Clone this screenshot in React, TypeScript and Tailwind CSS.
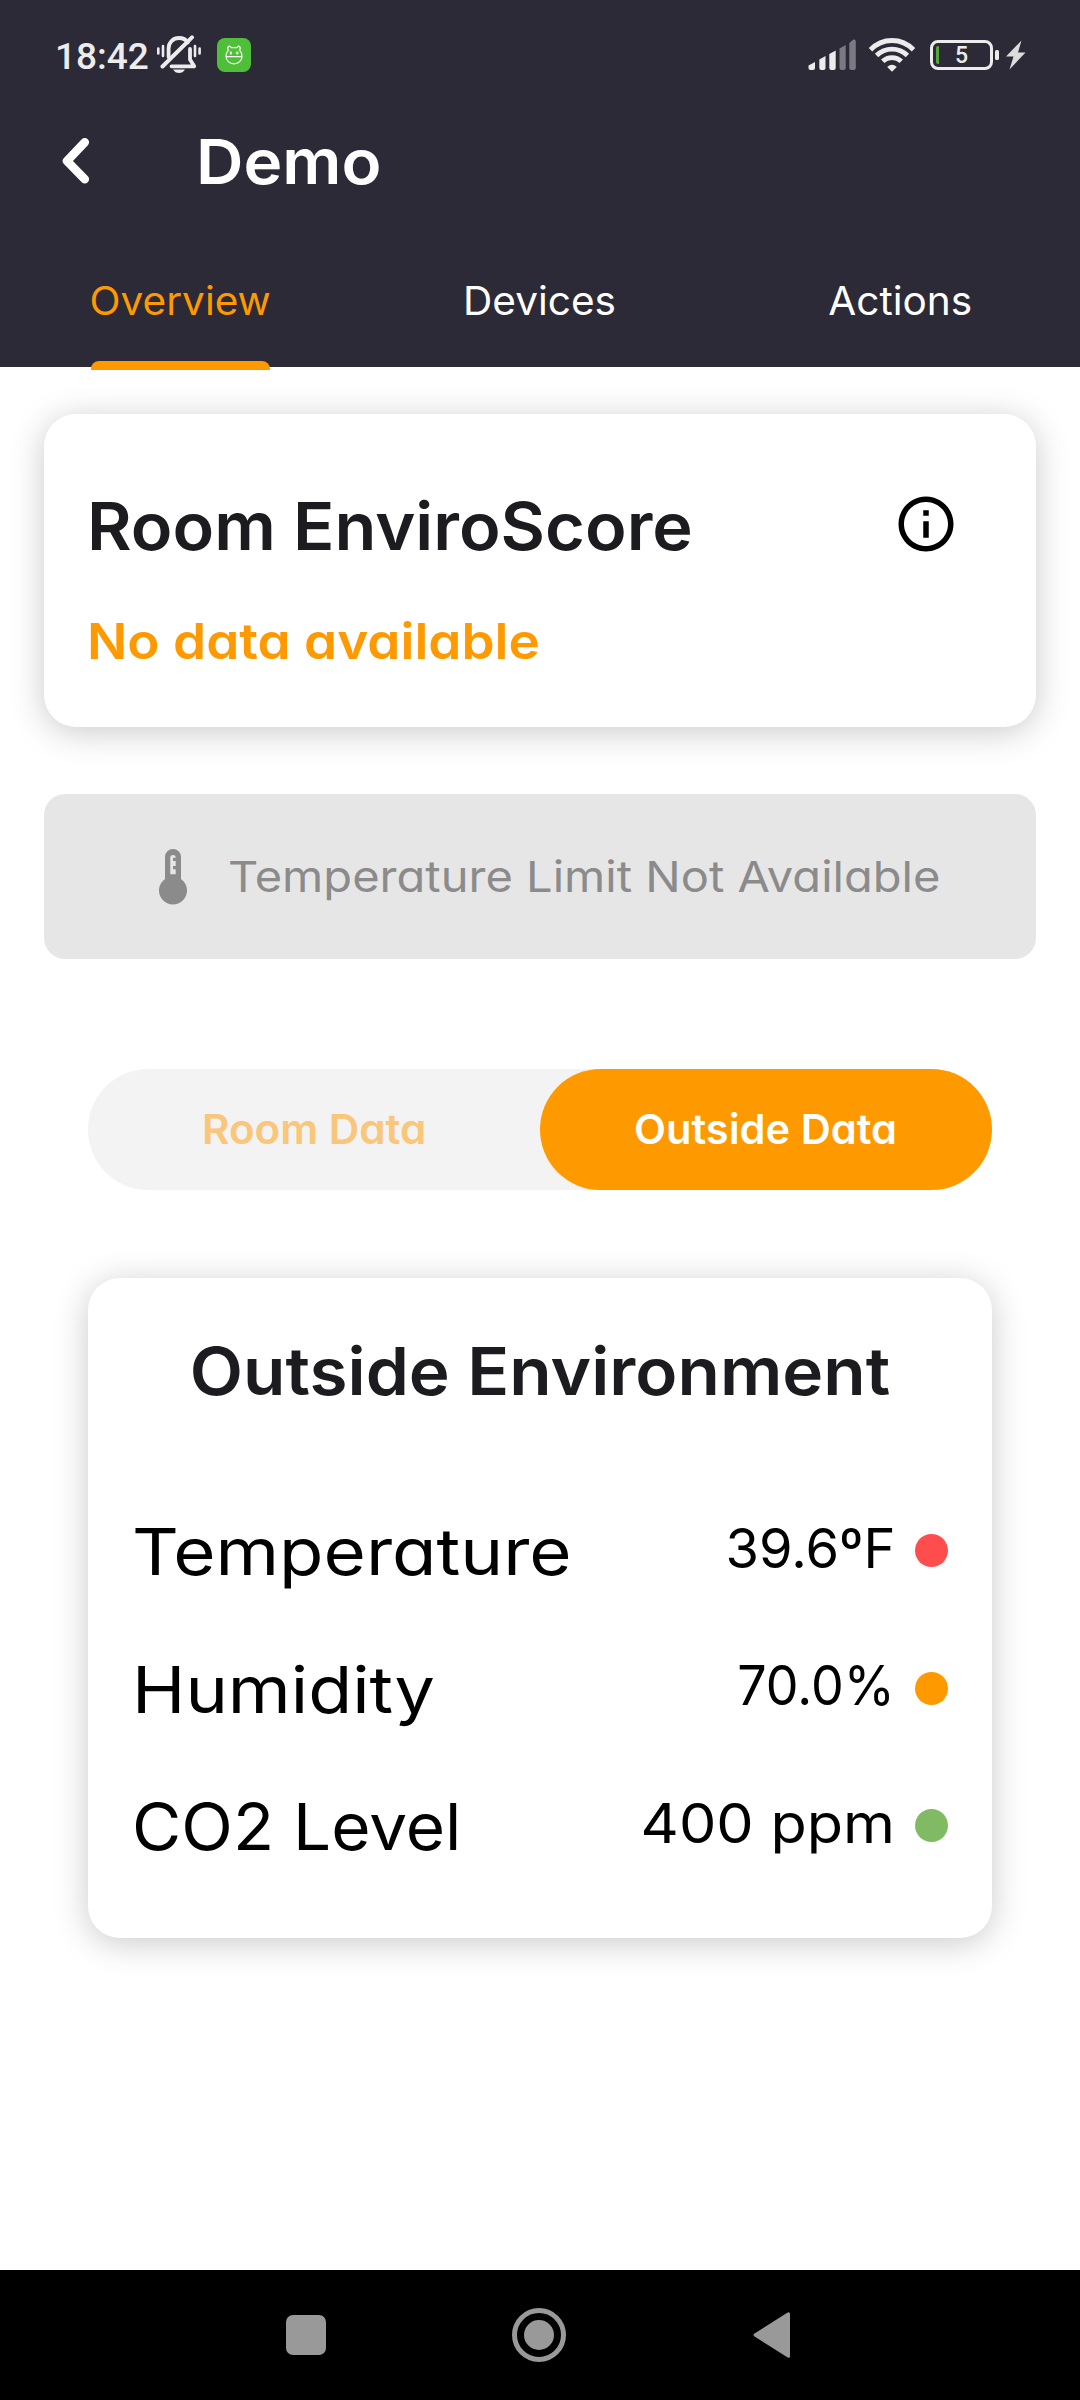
import { MdInfoOutline } from 'react-icons/md';

function BellOffIcon() {
  return (
    <svg width="46" height="40" viewBox="0 0 46 40" fill="none" stroke="#ececec" strokeLinecap="round">
      <path d="M2.3 13.5v5M7 11v10M39 11v10M43.6 13.5v5" strokeWidth="2.6" />
      <path d="M12.6 22V13.5C12.6 7 17.5 3 23 3c3.6 0 7 1.6 8.8 4.4M34 14v10.5l4.2 6.8H15.500" strokeWidth="3.8" strokeLinejoin="round" />
      <path d="M36 2.300 6.500 31.500" strokeWidth="4" />
      <path d="M17 34.500h12c-1.500 2.500-3.500 3.500-6 3.500s-4.500-1-6-3.500z" fill="#ececec" stroke="none" />
    </svg>
  );
}

function AppBadge() {
  return (
    <div className="flex h-[34px] w-[34px] items-center justify-center rounded-[8px] bg-[#4fbf3a]">
      <svg width="18" height="20" viewBox="0 0 18 20" fill="none" stroke="#f4ffef" strokeWidth="1.2" strokeLinejoin="round">
        <path d="M3.300 5.300C2.600 3.600 2.700 2 3.800 1.300c1-.5 2 .3 2.500 1.400h5.400c.5-1.100 1.500-1.900 2.500-1.400 1.100.7 1.200 2.300.5 4 1.700 1.700 2.300 3.700 2.300 5.900 0 4.400-3.400 7.600-8 7.600s-8-3.200-8-7.600c0-2.200.6-4.200 2.300-5.900z" />
        <path d="M1 11.700h16M10.800 8h3M12.300 6.500v3" />
        <path d="M5.800 6.500v3" strokeWidth="1.800" />
      </svg>
    </div>
  );
}

function SignalIcon() {
  return (
    <svg width="50" height="32" viewBox="0 0 50 32" fill="#ececec">
      <path d="M.5 26.500 7 23v6q0 2-2 2H2.500q-2 0-2-2z" />
      <path d="M11.300 20.500 17.500 17v12q0 2-2 2h-2.200q-2 0-2-2z" />
      <path d="M21.300 15 27.700 11.500V29q0 2-2 2h-2.400q-2 0-2-2z" />
      <g fill="#7b7a83">
        <path d="M31.500 9.500 37.700 6v23q0 2-2 2h-2.200q-2 0-2-2z" />
        <path d="M41.300 4 45 .8q2.800-.8 2.800 2V29q0 2-2 2h-2.500q-2 0-2-2z" />
      </g>
    </svg>
  );
}

function WifiIcon() {
  return (
    <svg width="48" height="36" viewBox="0 0 48 36" fill="none" stroke="#ececec" strokeWidth="4.800">
      <path d="M2.500 12.700C14.500.4 33.500.4 45.500 12.700" />
      <path d="M8.600 18.500c8.600-8.500 22.200-8.500 30.800 0" />
      <path d="M14.700 24.300c5.300-5 13.300-5 18.600 0" />
      <path d="M19.200 30q4.800-4.300 9.600 0L24 34.800z" fill="#ececec" stroke="none" />
    </svg>
  );
}

function BatteryIcon() {
  return (
    <div className="flex items-center gap-[2px]">
      <div className="relative flex h-[30px] w-[63px] items-center justify-center rounded-[8px] border-[3px] border-[#ececec]">
        <span className="absolute left-[3px] top-[3px] h-[18px] w-[3px] rounded-l-[2px] bg-[#55a637]" />
        <span className="font-[Roboto] text-[23px] leading-none font-medium text-[#ececec]">5</span>
      </div>
      <span className="h-[10px] w-[4px] rounded-[1.5px] bg-[#ececec]" />
    </div>
  );
}

function ThermometerIcon() {
  return (
    <svg width="28" height="56" viewBox="0 0 28 56" fill="#8b8b8b">
      <path d="M6 30V8a8 8 0 0 1 16 0v22a14 14 0 1 1-16 0z" />
      <path d="M11.300 25.300V8.700q0-2.700 2.700-2.700t2.700 2.700H14V12h2.700v5H14v3.300h2.700v5z" fill="#e6e6e6" />
    </svg>
  );
}

const tabs = [
  { label: 'Overview', active: true },
  { label: 'Devices', active: false },
  { label: 'Actions', active: false },
];

const readings = [
  { label: 'Temperature', labelClass: 'scale-x-[1.117]', value: '39.6ºF', valueClass: 'scale-x-[0.985]', dot: 'bg-[#ff4d4d]' },
  { label: 'Humidity', labelClass: 'scale-x-[1.105]', value: '70.0%', valueClass: 'scale-x-[0.945]', dot: 'bg-[#ff9900]' },
  { label: 'CO2 Level', labelClass: 'scale-x-[1.038]', value: '400 ppm', valueClass: 'scale-x-[1.078]', dot: 'bg-[#80bb64]' },
];

export default function App() {
  return (
    <div className="flex h-[2400px] w-[1080px] flex-col overflow-hidden bg-white font-[Inter,sans-serif] [font-feature-settings:'cv11']">
      <header className="h-[367px] shrink-0 bg-[#2b2a36] text-white">
        <div className="flex h-[110px] items-center justify-between pr-[54px] pl-[55px]">
          <div className="flex items-center">
            <span className="w-[101px] pt-[2px] font-[Roboto] text-[37px] leading-none font-medium text-[#ececec]">18:42</span>
            <BellOffIcon />
            <div className="ml-[15px]">
              <AppBadge />
            </div>
          </div>
          <div className="flex items-center">
            <SignalIcon />
            <div className="ml-[10px]">
              <WifiIcon />
            </div>
            <div className="ml-[14px]">
              <BatteryIcon />
            </div>
            <svg className="ml-[7px]" width="20" height="30" viewBox="0 0 20 30" fill="#dcdcdc">
              <path d="M15.500.5 0 16.500h7.500L3.500 29.500 19.500 12.500H12z" />
            </svg>
          </div>
        </div>
        <div className="flex h-[102px] items-center pl-[61px]">
          <svg width="30" height="48" viewBox="0 0 30 48" fill="none" stroke="white" strokeWidth="8.500" strokeLinecap="round" strokeLinejoin="round">
            <path d="M23.800 5.300 6 24l17.800 18.300" />
          </svg>
          <h1 className="ml-[105px] origin-left scale-x-[1.06] pt-[2px] text-[62px] leading-none font-semibold">Demo</h1>
        </div>
        <nav className="grid h-[158px] grid-cols-3">
          {tabs.map((tab) => (
            <div key={tab.label} className="flex flex-col items-center justify-between pt-[69px]">
              <span className={tab.active ? 'scale-x-[1.04] text-[39px] leading-[40px] text-[#ff9900]' : 'scale-x-[1.04] text-[39px] leading-[40px]'}>
                {tab.label}
              </span>
              {tab.active && <span className="relative h-[9px] w-[179px] rounded-t-[8px] bg-[#ff9900]" />}
            </div>
          ))}
        </nav>
      </header>

      <main className="flex flex-1 flex-col px-[44px] pt-[47px]">
        <section className="h-[313px] rounded-[32px] bg-white pt-[72px] pr-[77px] pl-[43px] shadow-[0_5px_34px_rgba(0,0,0,0.21)]">
          <div className="flex h-[80px] items-center justify-between">
            <h2 className="origin-left scale-x-[1.037] text-[66px] leading-none font-semibold whitespace-nowrap text-[#1c1b20]">Room EnviroScore</h2>
            <MdInfoOutline className="mb-[4px] h-[66px] w-[66px] text-black" />
          </div>
          <p className="mt-[50px] origin-left scale-x-[1.062] text-[50px] leading-[50px] font-semibold text-[#ff9900]">No data available</p>
        </section>

        <div className="mt-[67px] flex h-[165px] items-center rounded-[21px] bg-[#e6e6e6] pl-[115px]">
          <ThermometerIcon />
          <span className="ml-[41px] origin-left scale-x-[1.094] text-[43px] leading-none whitespace-nowrap text-[#8b8b8b]">Temperature Limit Not Available</span>
        </div>

        <div className="mx-[44px] mt-[110px] flex h-[121px] rounded-full bg-[#f3f3f3] text-[41px] leading-none font-semibold">
          <div className="flex flex-1 items-center justify-center text-[#f9c67a]">
            <span className="scale-x-[1.028]">Room Data</span>
          </div>
          <div className="flex flex-1 items-center justify-center rounded-full bg-[#ff9900] text-white">
            <span className="scale-x-[1.015]">Outside Data</span>
          </div>
        </div>

        <section className="mx-[44px] mt-[88px] h-[660px] rounded-[32px] bg-white pt-[60px] pr-[44px] pl-[44px] shadow-[0_5px_34px_rgba(0,0,0,0.21)]">
          <h2 className="scale-x-[1.05] text-center text-[66px] leading-[66px] font-semibold whitespace-nowrap text-[#1c1b20]">Outside Environment</h2>
          <div className="mt-[78px] text-black">
            {readings.map((r) => (
              <div key={r.label} className="flex h-[137.5px] items-center">
                <span className={`${r.labelClass} origin-left pt-[2px] text-[65px] leading-none`}>{r.label}</span>
                <span className={`${r.valueClass} ml-auto origin-right pb-[5px] text-[55px] leading-none`}>{r.value}</span>
                <span className={`${r.dot} ml-[20px] h-[33px] w-[33px] rounded-full`} />
              </div>
            ))}
          </div>
        </section>
      </main>

      <footer className="flex h-[130px] shrink-0 items-center bg-black pl-[286px]">
        <span className="h-[40px] w-[40px] rounded-[7px] bg-[#999999]" />
        <span className="ml-[186px] flex h-[54px] w-[54px] items-center justify-center rounded-full border-[5px] border-[#999999]">
          <span className="h-[30px] w-[30px] rounded-full bg-[#999999]" />
        </span>
        <svg className="ml-[187px]" width="38" height="46" viewBox="0 0 38 46" fill="#999999" stroke="#999999" strokeWidth="3" strokeLinejoin="round">
          <path d="M35.500 1.800v42.400L2 23z" />
        </svg>
      </footer>
    </div>
  );
}
